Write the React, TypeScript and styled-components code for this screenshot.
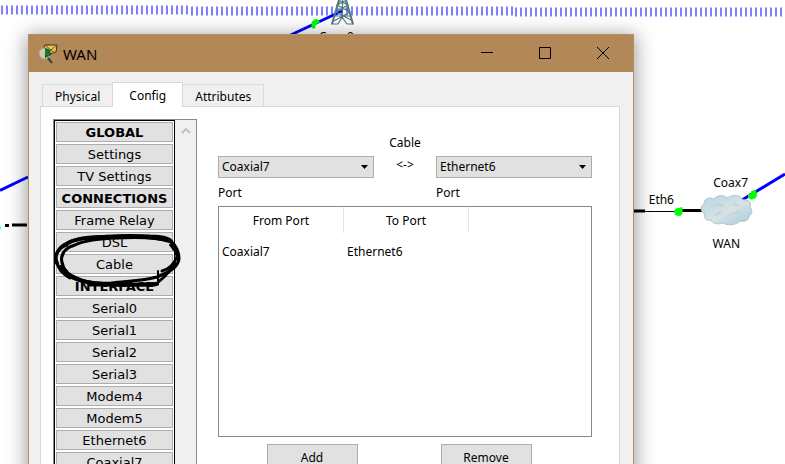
import React from "react";
import styled, { createGlobalStyle } from "styled-components";

const UI_FONT = '"Noto Sans", "Open Sans", sans-serif';
const NAV_FONT = '"DejaVu Sans", Verdana, sans-serif';

const GlobalStyle = createGlobalStyle`
  *, *::before, *::after { box-sizing: border-box; }
  body {
    margin: 0;
    background: #fff;
    color: #000;
    font-family: ${UI_FONT};
    font-size: 12px;
    line-height: 16px;
  }
  button, select { font: inherit; color: inherit; }
`;

const Workspace = styled.main`
  position: relative;
  height: 100vh;
  overflow: hidden;
`;

const Diagram = styled.svg<{ $side: "left" | "right" }>`
  position: absolute;
  top: 0;
  ${(p) => (p.$side === "left" ? "left: 0;" : "right: 0;")}
`;

const Boundary = styled.svg`
  position: absolute;
  top: 0;
  left: 0;
  width: 100%;
  height: 24px;
`;

const NodeLabel = styled.span<{ $top: number; $left?: number; $right?: number }>`
  position: absolute;
  top: ${(p) => p.$top}px;
  ${(p) => (p.$left !== undefined ? `left: ${p.$left}px;` : `right: ${p.$right}px;`)}
  white-space: nowrap;
`;

const Window = styled.section`
  position: relative;
  margin: 34px 151px 0 28px;
  border: 1px solid #b5905f;
  background: #f0f0f0;
  box-shadow: 0 3px 18px 2px rgba(0, 0, 0, 0.38);
`;

const TitleBar = styled.header`
  display: flex;
  align-items: center;
  height: 37px;
  padding: 0 1px 0 9px;
  background: #b28859;
`;

const AppIcon = styled.svg`
  flex: none;
  margin-right: 5px;
`;

const Title = styled.h1`
  flex: 1;
  margin: 0;
  font-size: 15px;
  line-height: 20px;
  font-weight: 400;
`;

const CaptionButton = styled.button`
  display: flex;
  align-items: center;
  justify-content: center;
  width: 58px;
  height: 37px;
  padding: 0 0 2px;
  border: 0;
  background: transparent;
`;

const Body = styled.div`
  padding: 10px 13px 12px 11px;
`;

const TabList = styled.div`
  display: flex;
  align-items: flex-end;
  height: 24px;
  padding-left: 2px;
`;

const Tab = styled.button<{ $active?: boolean }>`
  position: relative;
  z-index: ${(p) => (p.$active ? 1 : 0)};
  min-width: 71px;
  height: ${(p) => (p.$active ? 25 : 22)}px;
  margin: ${(p) => (p.$active ? "0 -1px -1px" : "0")};
  padding: 2px 12px 0;
  border: 1px solid #d9d9d9;
  border-bottom: 0;
  background: ${(p) => (p.$active ? "#fff" : "#f0f0f0")};
`;

const Pane = styled.div`
  display: flex;
  gap: 21px;
  padding: 12px 27px 12px 12px;
  border: 1px solid #d9d9d9;
  background: #fff;
`;

const Sidebar = styled.nav`
  position: relative;
  display: flex;
  flex: none;
  width: 144px;
  border: 1px solid #828790;
`;

const NavList = styled.div`
  display: flex;
  flex: 1;
  flex-direction: column;
  gap: 2px;
  padding: 1px;
  border: 1px solid #000;
`;

const NavButton = styled.button<{ $heading?: boolean }>`
  height: 20px;
  padding: 2px 0 0;
  border: 1px solid #adadad;
  background: #e1e1e1;
  font-family: ${NAV_FONT};
  font-size: 13px;
  line-height: 16px;
  font-weight: ${(p) => (p.$heading ? 700 : 400)};
`;

const ScrollTrack = styled.div`
  display: flex;
  justify-content: center;
  width: 21px;
  padding-top: 7px;
  background: #f0f0f0;
`;

const Scribble = styled.svg`
  position: absolute;
  top: 108px;
  left: -4px;
  pointer-events: none;
`;

const Content = styled.div`
  flex: 1;
  min-width: 0;
  padding-top: 16px;
`;

const PortPicker = styled.div`
  display: grid;
  grid-template-columns: 1fr 62px 1fr;
  margin-bottom: 5px;
`;

const Caption = styled.h2`
  grid-column: 1 / -1;
  margin: 0 0 5px;
  font-size: 12px;
  font-weight: 400;
  text-align: center;
`;

const Arrow = styled.span`
  padding-top: 1px;
  text-align: center;
`;

const SelectBox = styled.div`
  position: relative;
`;

const Select = styled.select`
  display: block;
  width: 100%;
  height: 22px;
  padding: 0 20px 0 3px;
  border: 1px solid #adadad;
  border-radius: 0;
  background: #e1e1e1;
  appearance: none;
`;

const SelectArrow = styled.svg`
  position: absolute;
  top: 9px;
  right: 6px;
  pointer-events: none;
`;

const PortLabel = styled.label<{ $column: number }>`
  grid-column: ${(p) => p.$column};
  margin-top: 7px;
`;

const TableFrame = styled.div`
  height: 231px;
  border: 1px solid #828790;
`;

const PortTable = styled.table`
  width: 100%;
  table-layout: fixed;
  border-collapse: separate;
  border-spacing: 0;

  th, td { padding: 0 3px; font-weight: 400; }
  th { width: 125px; height: 26px; padding-top: 2px; border-right: 1px solid #e5e5e5; }
  th:last-child { width: auto; border-right: 0; }
  td { height: 37px; }
`;

const Actions = styled.div`
  display: flex;
  justify-content: center;
  gap: 83px;
  margin-top: 7px;
  padding-right: 12px;
`;

const ActionButton = styled.button`
  width: 91px;
  height: 27px;
  padding: 0;
  border: 1px solid #adadad;
  background: #e1e1e1;
`;

const navItems = [
  { label: "GLOBAL", heading: true },
  { label: "Settings" },
  { label: "TV Settings" },
  { label: "CONNECTIONS", heading: true },
  { label: "Frame Relay" },
  { label: "DSL" },
  { label: "Cable" },
  { label: "INTERFACE", heading: true },
  { label: "Serial0" },
  { label: "Serial1" },
  { label: "Serial2" },
  { label: "Serial3" },
  { label: "Modem4" },
  { label: "Modem5" },
  { label: "Ethernet6" },
  { label: "Coaxial7" },
];

const dashRuns = [
  { from: 1, to: "189", y: 10 },
  { from: 191, to: "513", y: 11 },
  { from: 515, to: "100%", y: 12 },
];

function DashedBoundary() {
  return (
    <Boundary aria-hidden="true" shapeRendering="crispEdges">
      {dashRuns.map((run) => (
        <g key={run.from} strokeDasharray="2 3">
          <line x1={run.from} x2={run.to} y1={run.y} y2={run.y} stroke="#c0c0ff" strokeWidth="10" />
          <line x1={run.from} x2={run.to} y1={run.y} y2={run.y} stroke="#8080ff" strokeWidth="8" />
        </g>
      ))}
    </Boundary>
  );
}

function LeftDiagram() {
  return (
    <Diagram $side="left" width="370" height="240" aria-hidden="true">
      <path d="M0 190.500 28 177M280 40 342 11" stroke="#00f" strokeWidth="3" />
      <path d="M5 225.500h4M12 225h15" stroke="#000" strokeWidth="3" />
      <path d="M0 228h1" stroke="#6ff" strokeWidth="4" />
      <g fill="none" stroke="#527b80">
        <path d="M339 0 332 24M346 0l7 24" strokeWidth="2" />
        <path d="M337 3h11M336 9h13M334 16h17M338 0l10 5-12 7 15 8M347 0l-10 5 13 7-16 9M342.500 0v18M338 24l4-7 5 7M331 24h7M347 24h7" strokeWidth="1.200" />
      </g>
      <path d="M312 28v-4a4 4 0 0 1 7-3v2h-2l-2 2v3z" fill="#0f0" stroke="#0f0" />
    </Diagram>
  );
}

function RightDiagram() {
  return (
    <Diagram $side="right" width="151" height="240" aria-hidden="true">
      <defs>
        <linearGradient id="cloud" x1="0" y1="0" x2="1" y2="1">
          <stop offset="0" stopColor="#bdd5df" />
          <stop offset="0.300" stopColor="#c8dce3" />
          <stop offset="0.550" stopColor="#d8e2e4" />
          <stop offset="0.750" stopColor="#bed6df" />
          <stop offset="1" stopColor="#b3ccd7" />
        </linearGradient>
      </defs>
      <path d="M0 211h11" stroke="#000" strokeWidth="3" />
      <path d="M11 211.500h34" stroke="#000" strokeWidth="1" />
      <path d="M48 210.500h21" stroke="#000" strokeWidth="3" />
      <path d="M108 200l43-26" stroke="#00f" strokeWidth="3" />
      <path
        d="M70 204c0-6 6-7 10-5 4-5 10-4 13-1 6-4 14-3 16 2 6-1 9 3 7 7 3 3 2 8-1 9 0 5-5 6-9 5-3 4-13 5-17 2-6 2-11 0-12-3-6 1-8-3-6-6-5-2-5-8-1-10z"
        fill="url(#cloud)"
        stroke="#a6c8d2"
      />
      <path d="M79 206c4-3 7-2 10 0M94 216c4-3 8-2 11-5M81 215l6-3M99 204l6 2" stroke="#b2ccd6" strokeWidth="2" opacity="0.500" fill="none" />
      <path d="M40 210h5v-2l3-1a4 4 0 1 1-8 5z" fill="#0f0" />
      <circle cx="44.500" cy="212" r="4" fill="#0f0" />
      <path d="M115 195h3v-3l3-1 1 3a4 4 0 0 1-7 3z" fill="#0f0" stroke="#0f0" strokeWidth="2" />
    </Diagram>
  );
}

function WanIcon() {
  return (
    <AppIcon width="20" height="20" viewBox="0 0 20 20" aria-hidden="true">
      <path d="M6 3 7 1h12l-1 7-6 2-5-3z" fill="#e9c353" stroke="#3b3217" />
      <path d="m8 2 5 4 6-5M12 6l6 3" fill="none" stroke="#6f5a20" />
      <circle cx="6.500" cy="9.500" r="5.500" fill="#d4c5ad" stroke="#aaa08e" />
      <path d="m7 4 5 2 1 5-6 3z" fill="#064c16" />
      <path d="m7 6 5 2M7 8l5 2M7 10l5 1M8 5v8M10 6v6" stroke="#13a52d" strokeWidth="0.700" />
      <path d="m10 14 4 5" stroke="#30343a" strokeWidth="2" />
    </AppIcon>
  );
}

function PortSelect({ id, value }: { id: string; value: string }) {
  return (
    <SelectBox>
      <Select id={id} defaultValue={value}>
        <option>{value}</option>
      </Select>
      <SelectArrow width="7" height="4" aria-hidden="true">
        <path d="M0 0h7L3.500 4z" />
      </SelectArrow>
    </SelectBox>
  );
}

function InkCircle() {
  return (
    <Scribble width="136" height="66" viewBox="0 0 136 66" fill="none" stroke="#000" strokeLinecap="round" strokeLinejoin="round" aria-hidden="true">
      <path d="M7 36C3 28 8 19 17 15 25 11 30 11 36 10 52 8 78 7 100 8c12 0 20 2 22 6 5 5 7 11 7 17-1 8-9 13-22 18-14 4-30 4-46 6-13 1-24 0-34-5-9-3-14-9-15-16-2-8 3-14 13-17 10-5 24-6 39-7 20-1 43-1 56 3" strokeWidth="3" />
      <path d="M18 15C32 8 50 9 66 9c20-1 40 0 54 4M10 39c4 7 13 12 27 15 14 3 44 3 70 2" strokeWidth="4" />
      <path d="M17 17C9 19 4 28 7 34c1 7 6 12 13 16M121 14c1 7 6 8 6 15-3 7-7 12-15 14M40 57h65l9-8 12-13" strokeWidth="3" />
      <path d="M108 43v11M14 25c-4 7-3 14 3 18M120 17l8 10v8" strokeWidth="2" />
    </Scribble>
  );
}

export default function App() {
  return (
    <>
      <GlobalStyle />
      <Workspace>
        <DashedBoundary />
        <LeftDiagram />
        <RightDiagram />
        <NodeLabel $top={29} $left={319}>Coax0</NodeLabel>
        <NodeLabel $top={192} $right={111}>Eth6</NodeLabel>
        <NodeLabel $top={175} $right={37}>Coax7</NodeLabel>
        <NodeLabel $top={236} $right={45}>WAN</NodeLabel>

        <Window aria-label="WAN">
          <TitleBar>
            <WanIcon />
            <Title>WAN</Title>
            <CaptionButton aria-label="Minimize">
              <svg width="12" height="12"><path d="M0 5.500h12" stroke="#000" /></svg>
            </CaptionButton>
            <CaptionButton aria-label="Maximize">
              <svg width="12" height="12"><path d="M.5 .5h11v11H.5z" fill="none" stroke="#000" /></svg>
            </CaptionButton>
            <CaptionButton aria-label="Close">
              <svg width="12" height="12"><path d="m0 0 12 12M12 0 0 12" stroke="#000" /></svg>
            </CaptionButton>
          </TitleBar>
          <Body>
            <TabList role="tablist">
              <Tab role="tab" aria-selected="false">Physical</Tab>
              <Tab role="tab" aria-selected="true" $active>Config</Tab>
              <Tab role="tab" aria-selected="false">Attributes</Tab>
            </TabList>
            <Pane role="tabpanel">
              <Sidebar>
                <NavList>
                  {navItems.map((item) => (
                    <NavButton key={item.label} $heading={item.heading}>{item.label}</NavButton>
                  ))}
                </NavList>
                <ScrollTrack>
                  <svg width="10" height="8" aria-hidden="true">
                    <path d="m1 6 4-4 4 4" fill="none" stroke="#bfbfbf" strokeWidth="2" />
                  </svg>
                </ScrollTrack>
                <InkCircle />
              </Sidebar>
              <Content>
                <PortPicker>
                  <Caption>Cable</Caption>
                  <PortSelect id="from-port" value="Coaxial7" />
                  <Arrow>&lt;-&gt;</Arrow>
                  <PortSelect id="to-port" value="Ethernet6" />
                  <PortLabel htmlFor="from-port" $column={1}>Port</PortLabel>
                  <PortLabel htmlFor="to-port" $column={3}>Port</PortLabel>
                </PortPicker>
                <TableFrame>
                  <PortTable>
                    <thead>
                      <tr><th>From Port</th><th>To Port</th><th /></tr>
                    </thead>
                    <tbody>
                      <tr><td>Coaxial7</td><td>Ethernet6</td><td /></tr>
                    </tbody>
                  </PortTable>
                </TableFrame>
                <Actions>
                  <ActionButton>Add</ActionButton>
                  <ActionButton>Remove</ActionButton>
                </Actions>
              </Content>
            </Pane>
          </Body>
        </Window>
      </Workspace>
    </>
  );
}
